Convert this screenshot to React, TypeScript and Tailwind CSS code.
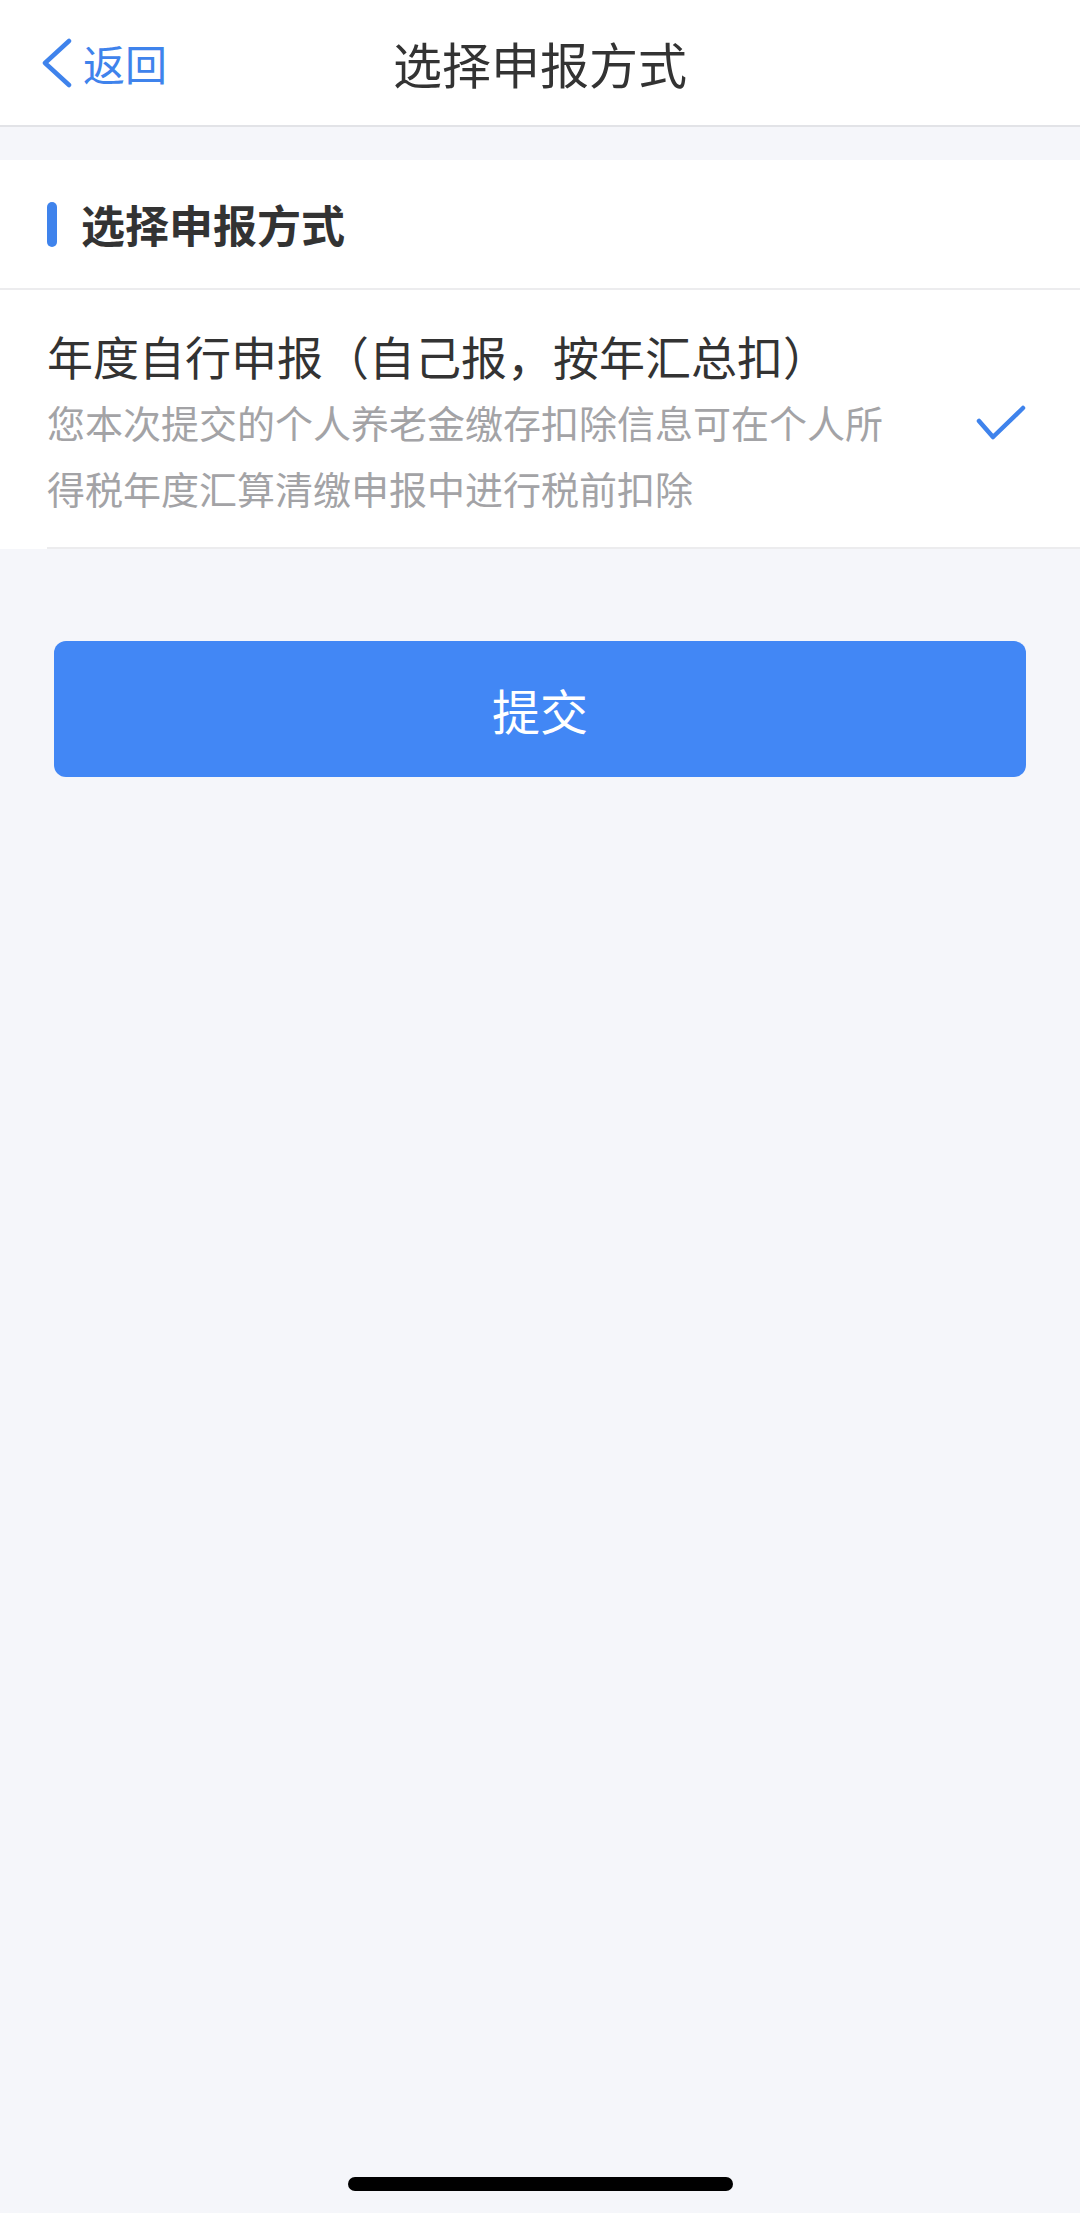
import React from "react";

const font = { fontFamily: '"Noto Sans CJK SC", "Noto Sans", sans-serif' };

export default function App() {
  return (
    <div
      className="w-[1080px] h-[2213px] bg-[#f5f6fa] flex flex-col relative overflow-hidden"
      style={font}
    >
      {/* Nav bar */}
      <div className="h-[127px] bg-white border-b-2 border-[#e2e3e7] flex items-center relative shrink-0">
        <div className="flex items-center pl-[41px] gap-[10px] text-[#3f83ec]">
          <svg width="32" height="50" viewBox="0 0 32 50" fill="none">
            <path
              d="M28 3 L4 25 L28 47"
              stroke="#3f83ec"
              strokeWidth="4.5"
              strokeLinecap="round"
              strokeLinejoin="round"
            />
          </svg>
          <span className="text-[42px] leading-none">返回</span>
        </div>
        <div className="absolute inset-0 flex items-center justify-center pointer-events-none">
          <span className="text-[49px] leading-none text-[#333333]">选择申报方式</span>
        </div>
      </div>

      {/* gap */}
      <div className="h-[33px] shrink-0" />

      {/* Section */}
      <div className="bg-white shrink-0">
        <div className="h-[130px] flex items-center pl-[47px] gap-[24px] border-b-2 border-[#ececee]">
          <div className="w-[10px] h-[45px] rounded-full bg-[#3f83ec]" />
          <span className="text-[44px] font-bold text-[#333333] leading-none">选择申报方式</span>
        </div>
        <div className="pl-[47px]">
          <div className="flex items-center border-b-2 border-[#ececee] pt-[35px] pb-[26px]">
            <div className="w-[860px]">
              <div className="text-[46px] leading-[60px] text-[#333333]">
                年度自行申报（自己报，按年汇总扣）
              </div>
              <div className="mt-[4px] text-[38px] leading-[66px] text-[#a3a3a6]">
                您本次提交的个人养老金缴存扣除信息可在个人所得税年度汇算清缴申报中进行税前扣除
              </div>
            </div>
            <div className="flex-1 flex justify-end pr-[54px]">
              <svg width="50" height="36" viewBox="0 0 50 36" fill="none">
                <path
                  d="M3 16 L17 32 L47 3"
                  stroke="#3f83ec"
                  strokeWidth="4.5"
                  strokeLinecap="round"
                  strokeLinejoin="round"
                />
              </svg>
            </div>
          </div>
        </div>
      </div>

      {/* Button */}
      <div className="px-[54px] mt-[92px] shrink-0">
        <button className="w-full h-[136px] rounded-[12px] bg-[#4287f5] text-white text-[48px] flex items-center justify-center">
          提交
        </button>
      </div>

      {/* Home indicator */}
      <div className="absolute left-[348px] top-[2177px] w-[385px] h-[14px] rounded-full bg-black" />
    </div>
  );
}
